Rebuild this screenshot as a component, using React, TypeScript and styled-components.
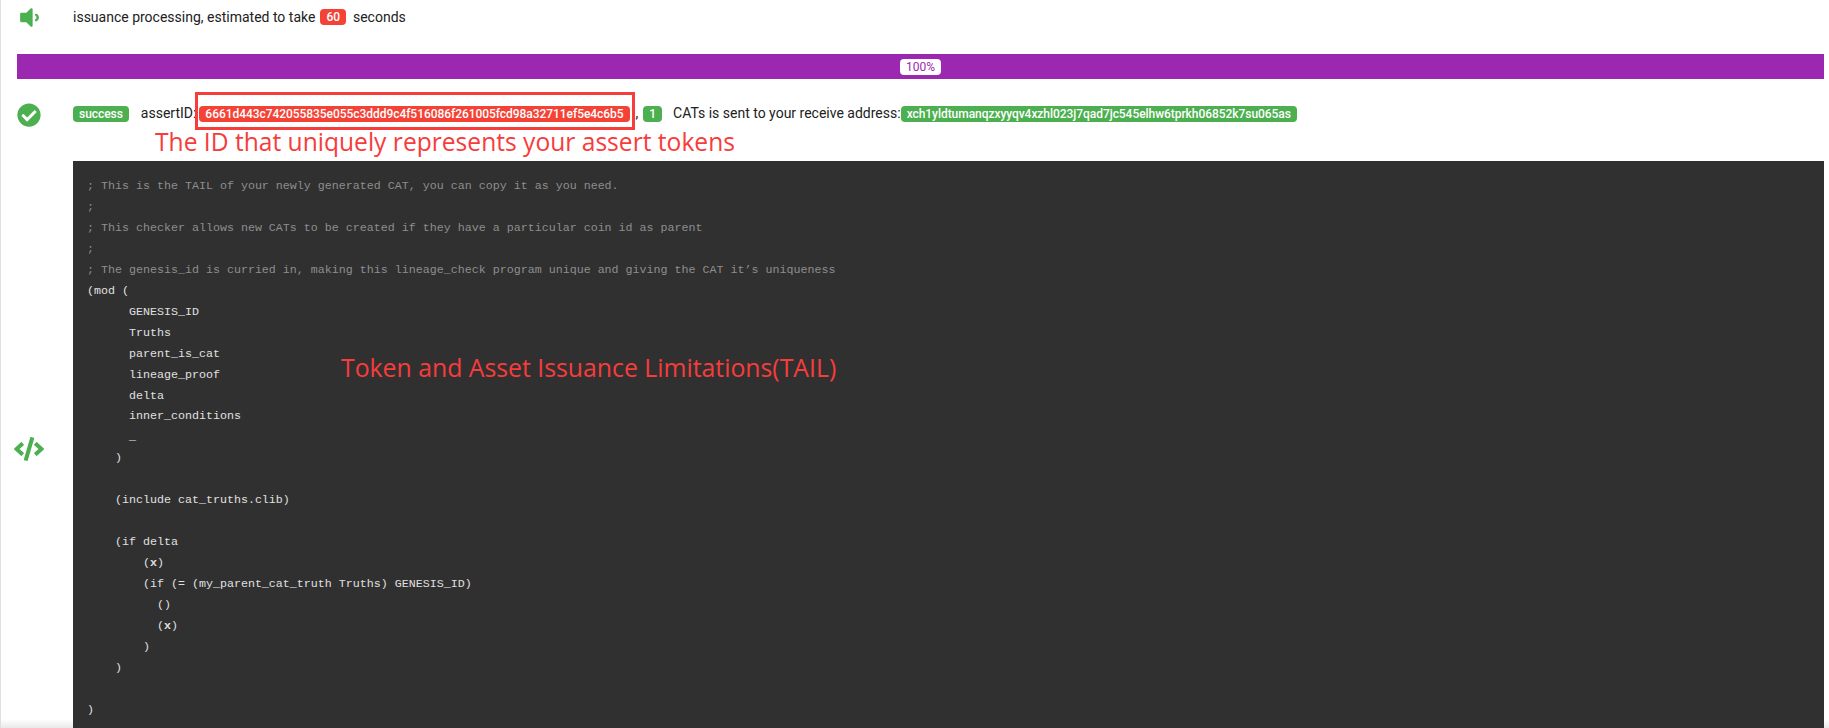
import React from 'react';
import styled, {createGlobalStyle} from "styled-components";
import {FaCheckCircle, FaCode, FaVolumeDown} from "react-icons/fa";

const comments = [
    "; This is the TAIL of your newly generated CAT, you can copy it as you need.",
    ";",
    "; This checker allows new CATs to be created if they have a particular coin id as parent",
    ";",
    "; The genesis_id is curried in, making this lineage_check program unique and giving the CAT it\u2019s uniqueness",
]

const codeLines = [
    "(mod (",
    "      GENESIS_ID",
    "      Truths",
    "      parent_is_cat",
    "      lineage_proof",
    "      delta",
    "      inner_conditions",
    "      _",
    "    )",
    "",
    "    (include cat_truths.clib)",
    "",
    "    (if delta",
    "        (*x*)",
    "        (if (= (my_parent_cat_truth Truths) GENESIS_ID)",
    "          ()",
    "          (*x*)",
    "        )",
    "    )",
    "",
    ")",
]

const renderLine = (line: string) => {
    const parts = line.split("*")
    return parts.map((part, i) => i === 1 ? <b key={i}>{part}</b> : part)
}

export default function App() {
    return (
        <>
            <GlobalStyle />
            <Page>
                <TopRow>
                    <IconCell>
                        <FaVolumeDown size={25} />
                    </IconCell>
                    <Message>
                        issuance processing, estimated to take
                        <Badge $color="#f44336" $left={5} $right={7}>60</Badge>
                        seconds
                    </Message>
                </TopRow>
                <Progress>
                    <ProgressLabel>100%</ProgressLabel>
                </Progress>
                <ResultRow>
                    <IconCell>
                        <FaCheckCircle size={24} />
                    </IconCell>
                    <Message>
                        <Badge $color="#4caf50" $left={0} $right={12}>success</Badge>
                        assertID:
                        <Badge $color="#f44336" $left={3} $right={6}>6661d443c742055835e055c3ddd9c4f516086f261005fcd98a32711ef5e4c6b5</Badge>
                        ,
                        <Badge $color="#4caf50" $left={5} $right={11}>1</Badge>
                        CATs is sent to your receive address:
                        <Badge $color="#4caf50" $left={0} $right={0}>xch1yldtumanqzxyyqv4xzhl023j7qad7jc545elhw6tprkh06852k7su065as</Badge>
                    </Message>
                    <IdHighlight />
                    <IdNote>The ID that uniquely represents your assert tokens</IdNote>
                </ResultRow>
                <CodeRow>
                    <CodeIcon>
                        <FaCode size={30} />
                    </CodeIcon>
                    <CodeBlock>
                        {comments.map((line, i) => <Comment key={i}>{line}</Comment>)}
                        {codeLines.map((line, i) => <CodeLine key={i}>{renderLine(line)}</CodeLine>)}
                        <TailNote>Token and Asset Issuance Limitations(TAIL)</TailNote>
                    </CodeBlock>
                </CodeRow>
            </Page>
        </>
    );
};

const GlobalStyle = createGlobalStyle`
  html, body {
    margin: 0;
    padding: 0;
    background: #fff;
    overflow: hidden;
  }
  * {
    box-sizing: border-box;
  }
`
const Page = styled.div`
  position: relative;
  height: 728px;
  overflow: hidden;
  border-left: 1px solid #e0e0e0;
  font-family: Roboto, "Liberation Sans", sans-serif;
  font-size: 14px;
  color: #212121;
  &::after {
    content: "";
    position: absolute;
    left: 0;
    right: 0;
    bottom: 0;
    height: 9px;
    background: linear-gradient(180deg, rgba(235, 235, 235, 0) 0%, #e9e9e9 100%);
  }
`
const TopRow = styled.div`
  display: flex;
  align-items: center;
  height: 36px;
  padding-bottom: 2px;
`
const ResultRow = styled.div`
  position: relative;
  display: flex;
  height: 82px;
  padding: 24px 0 0;
`
const IconCell = styled.div`
  flex: 0 0 72px;
  display: flex;
  justify-content: center;
  padding-right: 16px;
  color: #4caf50;
`
const Message = styled.div`
  display: flex;
  align-items: center;
  white-space: nowrap;
  height: 21px;
  line-height: 21px;
`
const Badge = styled.span<{$color: string, $left: number, $right: number}>`
  display: inline-block;
  height: 16px;
  line-height: 16px;
  margin: 0 ${p => p.$right}px 0 ${p => p.$left}px;
  padding: 0 6px;
  border-radius: 4px;
  font-size: 12px;
  font-weight: 500;
  letter-spacing: -0.05px;
  color: #fff;
  background: ${p => p.$color};
`
const Progress = styled.div`
  display: flex;
  align-items: center;
  justify-content: center;
  height: 25px;
  margin: 18px 5px 0 16px;
  background: #9c27b0;
`
const ProgressLabel = styled.span`
  height: 16px;
  line-height: 16px;
  padding: 0 6px;
  border-radius: 4px;
  font-size: 12px;
  color: #9c27b0;
  background: #fff;
`
const IdHighlight = styled.div`
  position: absolute;
  left: 194px;
  top: 13px;
  width: 440px;
  height: 38px;
  border: 3px solid #f73c3c;
`
const IdNote = styled.div`
  position: absolute;
  left: 154px;
  top: 47px;
  font-family: "Open Sans", "Noto Sans", sans-serif;
  font-size: 24.6px;
  line-height: 32px;
  white-space: nowrap;
  color: #f73c3c;
`
const CodeRow = styled.div`
  position: relative;
  z-index: 1;
  display: flex;
  align-items: stretch;
`
const CodeIcon = styled.div`
  flex: 0 0 72px;
  display: flex;
  justify-content: center;
  padding: 273px 16px 0 0;
  color: #4caf50;
`
const CodeBlock = styled.pre`
  position: relative;
  flex: 1;
  height: 567px;
  margin: 0 5px 0 0;
  padding: 15px 14px 0;
  overflow: hidden;
  font-family: "Liberation Mono", monospace;
  font-size: 11.67px;
  line-height: 20.96px;
  color: #e0e0e0;
  background: #303030;
`
const Comment = styled.div`
  height: 20.96px;
  color: #8e8e8e;
`
const CodeLine = styled.div`
  height: 20.96px;
`
const TailNote = styled.div`
  position: absolute;
  left: 268px;
  top: 190px;
  font-family: "Open Sans", "Noto Sans", sans-serif;
  font-size: 24.8px;
  line-height: 32px;
  white-space: nowrap;
  color: #f73c3c;
`
